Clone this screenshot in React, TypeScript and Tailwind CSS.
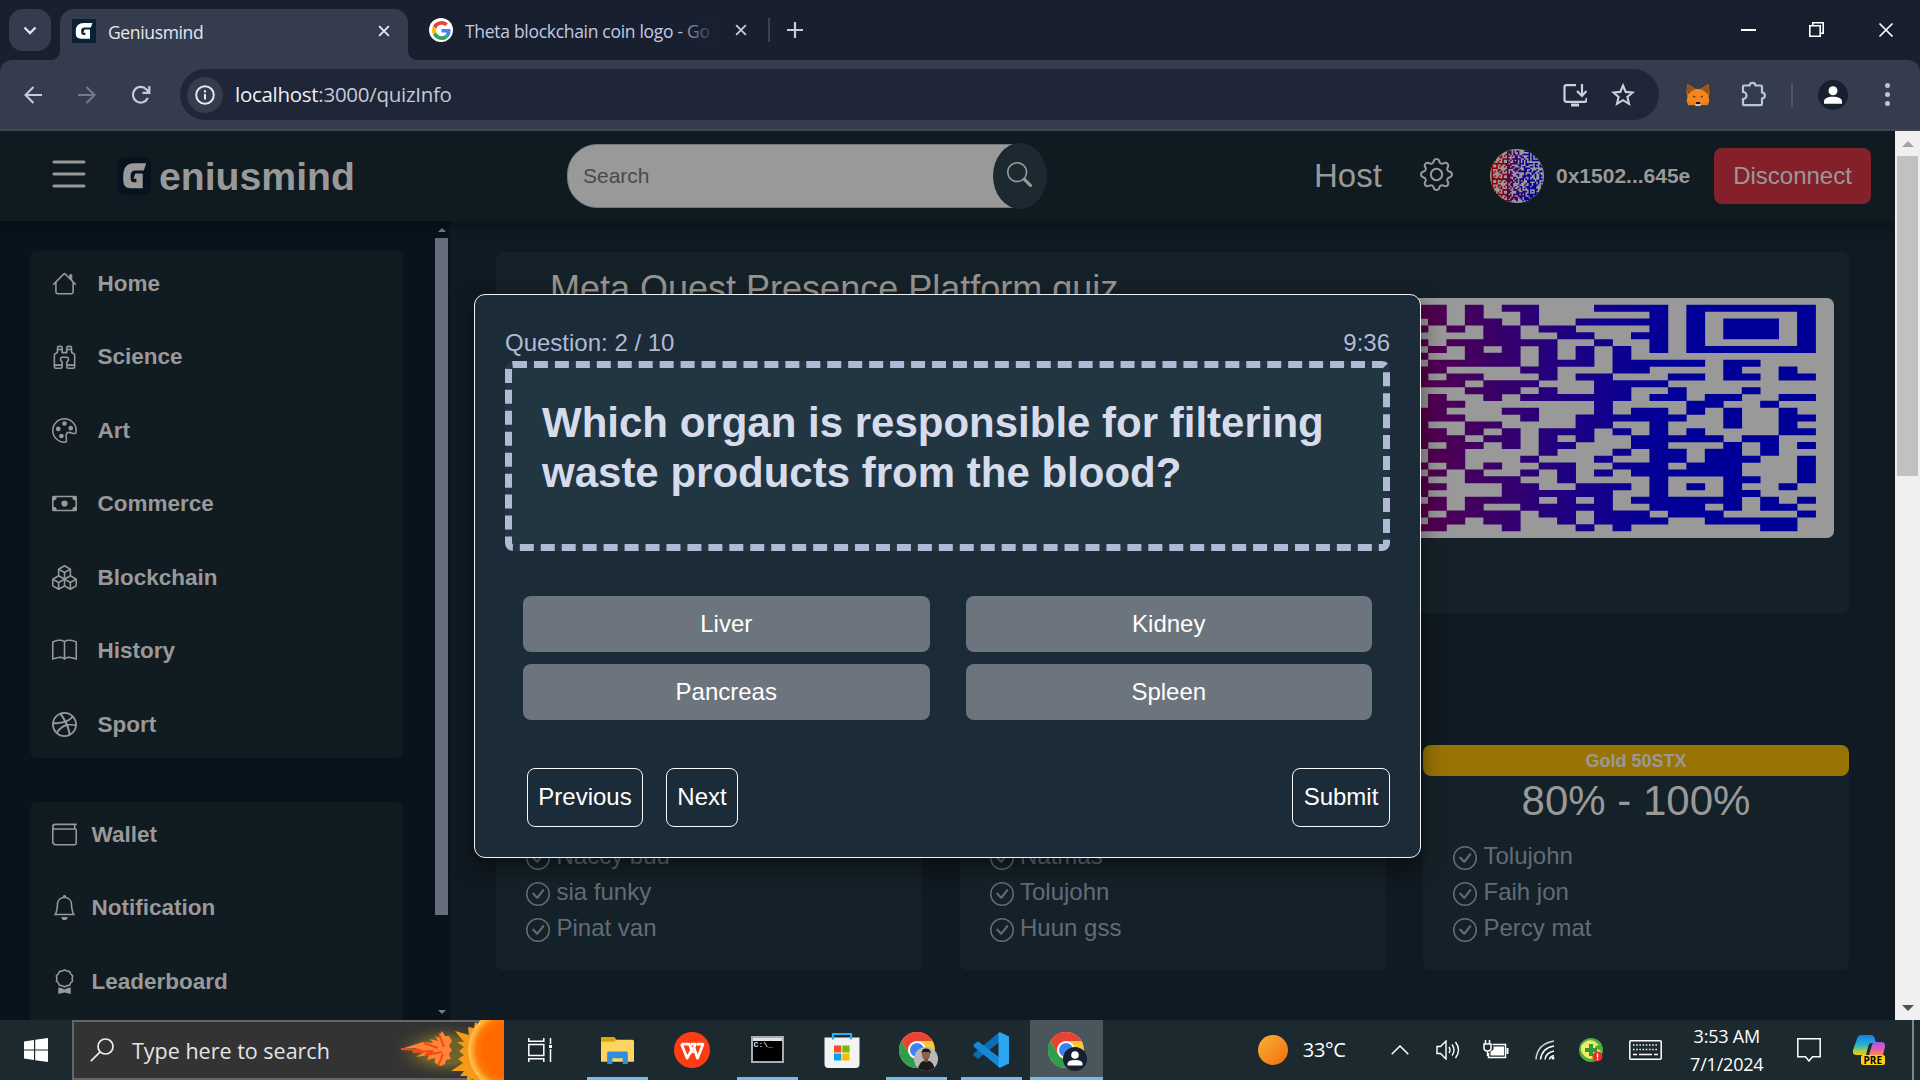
import React from "react";
import {
  BsAward,
  BsBell,
  BsBinoculars,
  BsBook,
  BsBoxes,
  BsCash,
  BsCheckCircle,
  BsDribbble,
  BsGear,
  BsHouse,
  BsList,
  BsPalette,
  BsSearch,
  BsWallet,
} from "react-icons/bs";

const QR_ROWS: number[][] = [
  [0, 1, 3, 5, 6, 10, 11, 12, 13, 15, 16, 17, 18, 19, 20, 21],
  [0, 1, 3, 6, 13, 15, 21],
  [1, 3, 4, 6, 9, 10, 11, 12, 13, 15, 17, 18, 19, 21],
  [0, 2, 4, 5, 7, 8, 13, 15, 17, 18, 19, 21],
  [4, 5, 8, 9, 12, 13, 15, 17, 18, 19, 21],
  [0, 2, 3, 4, 5, 6, 7, 10, 13, 15, 21],
  [1, 3, 5, 7, 9, 11, 13, 15, 16, 17, 18, 19, 20, 21],
  [0, 3, 4, 5, 7, 9, 11],
  [1, 2, 3, 4, 5, 7, 8, 9, 11, 12, 13, 14, 15, 17, 18],
  [0, 1, 6, 7, 11, 12, 17, 20],
  [0, 2, 3, 7, 9, 10, 14, 15, 17, 18, 20, 21],
  [0, 1, 2, 4, 5, 6, 10, 11, 12, 13],
  [3, 4, 5, 7, 10, 11, 14, 18],
  [1, 4, 6, 7, 8, 9, 10, 11, 13, 14, 16, 17, 20, 21],
  [1, 2, 10, 15, 16, 19],
  [0, 1, 5, 6, 10, 12, 13, 15, 17, 20],
  [0, 1, 2, 6, 9, 10, 11, 12, 13, 14, 17, 20, 21],
  [0, 3, 4, 9, 10, 13, 17, 20],
  [0, 1, 3, 5, 7, 8, 9, 11, 13, 15, 20, 21],
  [0, 1, 2, 4, 5, 7, 9, 12, 13, 14, 15, 16, 18, 19],
  [0, 2, 3, 5, 7, 8, 12, 13, 17, 19, 21],
  [1, 2, 7, 11, 13, 14, 16, 17, 19],
  [1, 2, 6, 10, 13, 14, 16, 17, 18, 21],
  [0, 2, 4, 7, 8, 11, 12, 13, 15, 16, 17, 21],
  [1, 3, 6, 8, 10, 12, 13, 14, 15, 16, 17, 21],
  [0, 3, 4, 5, 8, 13, 17, 18, 21],
  [0, 1, 5, 6, 9, 10, 11, 13, 15, 17, 20],
  [0, 5, 6, 7, 8, 9, 10, 13, 17, 18],
  [1, 3, 4, 5, 6, 8, 10, 12, 13, 14, 15, 16, 17, 19, 21],
  [0, 1, 3, 6, 7, 8, 9, 10, 13, 14, 15, 17, 19, 20],
  [0, 2, 3, 4, 5, 7, 8, 10, 11, 12, 14, 15, 16, 21],
  [1, 2, 4, 5, 8, 10, 11, 12, 13, 16, 17, 18, 19, 20],
  [0, 1, 5, 9, 11, 19, 20],
];

const QR_PATH = QR_ROWS.map((cols, r) => {
  const right = cols.map((c) => `M${12 + c} ${r + 1}h1.02v1.02h-1.02z`);
  const left = Array.from({ length: 11 }, (_, c) => c)
    .filter((c) => (c * 7 + r * 5 + c * r * 3 + ((c * r) >> 1)) % 5 < 2)
    .map((c) => `M${c + 1} ${r + 1}h1.02v1.02h-1.02z`);
  return right.join("") + left.join("");
}).join("");

function QrImage({ id, className }: { id: string; className: string }) {
  return (
    <svg viewBox="0 0 35 35" preserveAspectRatio="none" className={className}>
      <defs>
        <linearGradient id={id} gradientUnits="userSpaceOnUse" x1="1" y1="0" x2="34" y2="0">
          <stop offset="0" stopColor="#990000" />
          <stop offset="0.2" stopColor="#900009" />
          <stop offset="0.37" stopColor="#520050" />
          <stop offset="0.55" stopColor="#28007a" />
          <stop offset="0.7" stopColor="#080094" />
          <stop offset="0.8" stopColor="#000099" />
        </linearGradient>
      </defs>
      <rect width="35" height="35" fill="#999999" />
      <path d={QR_PATH} fill={`url(#${id})`} />
    </svg>
  );
}

function GLogo({ className, bg, fg }: { className: string; bg: string; fg: string }) {
  return (
    <svg viewBox="0 0 24 24" preserveAspectRatio="none" className={className}>
      <rect width="24" height="24" fill={bg} />
      <path
        fill={fg}
        d="M20.5 4 L18.8 8.600 H12.8 Q9.2 8.600 9.2 11.8 V13.6 Q9.2 16 11.5 16 H13.4 V13.800 H11.2 L12.6 10.400 H18 V19.8 H9 Q3.8 19.8 3.8 14.6 V12 Q3.8 4 11.8 4 Z"
      />
    </svg>
  );
}

const X = ({ className, w = 2.2 }: { className: string; w?: number }) => (
  <svg viewBox="0 0 16 16" className={className} stroke="currentColor" strokeWidth={w} fill="none">
    <path d="M1.5 1.5l13 13M14.5 1.5l-13 13" />
  </svg>
);

function GoogleG() {
  return (
    <div className="flex h-6 w-6 items-center justify-center rounded-full bg-white">
      <svg viewBox="0 0 48 48" className="h-[19px] w-[19px]">
        <path fill="#EA4335" d="M24 9.5c3.54 0 6.71 1.22 9.21 3.6l6.85-6.85C35.9 2.38 30.47 0 24 0 14.62 0 6.51 5.38 2.56 13.22l7.98 6.19C12.43 13.72 17.74 9.5 24 9.5z" />
        <path fill="#4285F4" d="M46.98 24.55c0-1.57-.15-3.09-.38-4.55H24v9.02h12.94c-.58 2.96-2.26 5.48-4.78 7.18l7.73 6c4.51-4.18 7.09-10.36 7.09-17.65z" />
        <path fill="#FBBC05" d="M10.53 28.59c-.48-1.45-.76-2.99-.76-4.59s.27-3.14.76-4.59l-7.98-6.19C.92 16.46 0 20.12 0 24c0 3.88.92 7.54 2.56 10.78l7.97-6.19z" />
        <path fill="#34A853" d="M24 48c6.48 0 11.93-2.13 15.89-5.81l-7.73-6c-2.15 1.45-4.92 2.3-8.16 2.3-6.26 0-11.57-4.22-13.47-9.91l-7.98 6.19C6.51 42.62 14.62 48 24 48z" />
      </svg>
    </div>
  );
}

function TabStrip() {
  return (
    <div className="flex h-[60px] w-full bg-[#182030] font-['Open_Sans','Noto_Sans',sans-serif]">
      <div className="ml-[9px] mt-[9px] flex h-[42px] w-[42px] items-center justify-center rounded-[14px] bg-[#343c4d]">
        <svg viewBox="0 0 14 9" className="h-[9px] w-[14px]" fill="none" stroke="#e3e5ea" strokeWidth="2.3">
          <path d="M1.5 1.5L7 7l5.500-5.500" />
        </svg>
      </div>
      <div className="flex h-[60px] w-[366px] items-end">
        <div className="h-3 w-[9px] overflow-hidden bg-[#343c4d]">
          <div className="h-3 w-[9px] rounded-br-[9px] bg-[#182030]" />
        </div>
        <div className="flex h-[51px] w-[348px] items-center rounded-t-[14px] bg-[#343c4d] pb-2 pl-3">
          <GLogo className="h-6 w-6" bg="#0a2035" fg="#ffffff" />
          <span className="ml-3 w-[260px] whitespace-nowrap pt-[3px] text-[17.500px] tracking-[-0.35px] text-[#e6e8ee]">
            Geniusmind
          </span>
          <X className="ml-[10px] h-3 w-3 text-[#e6e8ee]" w={2.4} />
        </div>
        <div className="h-3 w-[9px] overflow-hidden bg-[#343c4d]">
          <div className="h-3 w-[9px] rounded-bl-[9px] bg-[#182030]" />
        </div>
      </div>
      <div className="ml-3 flex h-[60px] items-center text-[#c3cbe0]">
        <GoogleG />
        <div className="relative ml-3 w-[251px] whitespace-nowrap pt-[3px] text-[17.500px] tracking-[-0.3px]">
          Theta blockchain coin logo - Go
          <div className="absolute right-0 top-0 h-full w-10 bg-gradient-to-r from-transparent to-[#182030]" />
        </div>
        <X className="ml-[19px] h-3 w-3 text-[#c3cbe0]" w={2.4} />
        <div className="ml-[21px] h-6 w-[2px] bg-[#3a4255]" />
        <svg viewBox="0 0 16 16" className="ml-[17px] h-4 w-4" stroke="#c3cbe0" strokeWidth="2.200">
          <path d="M8 0v16M0 8h16" />
        </svg>
      </div>
      <div className="ml-auto mr-[26px] flex h-[60px] items-center pb-[1px] text-white">
        <div className="h-[2px] w-[15px] bg-white" />
        <svg viewBox="0 0 15 15" className="ml-[53px] h-[15px] w-[15px]" fill="none" stroke="#fff" strokeWidth="1.6">
          <path d="M.8 3.800h10.400v10.400H.8zM3.800 3.500V.8h10.400v10.400h-2.800" />
        </svg>
        <X className="ml-[54px] h-4 w-4" w={1.7} />
      </div>
    </div>
  );
}

function Fox() {
  return (
    <svg viewBox="0 0 24 24" className="h-6 w-6">
      <path d="M1.500 1L9.500 6h5L22.500 1l1 8-1 4 .8 5.500-2 3.800-5-.5L14 23h-4l-2.300-1.200-5 .5-2-3.800.8-5.500-1-4z" fill="#f6851b" />
      <path d="M1.500 1l8 5.500-3 1L2 11.500.900 9zM22.500 1l-8 5.500 3 1 4.500 4 1.100-2.500z" fill="#9a5218" />
      <path d="M1 18.500l7 .5 1.500 3-2 0-5 .3zM23 18.500l-7 .5-1.500 3 2 0 5 .3z" fill="#e8821e" />
      <path d="M7 12.500l3 1.300-2.500.7zM17 12.500l-3 1.300 2.500.7z" fill="#3b2b25" />
      <path d="M9 19.500h6l-.5 3.500h-5z" fill="#d5bfb2" />
      <path d="M10 19h4l.5 2h-5z" fill="#161616" />
    </svg>
  );
}

function Toolbar() {
  return (
    <div className="bg-[#182030]">
      <div className="flex h-[69px] items-center rounded-t-[12px] bg-[#343c4d] text-[#c3cbe0]">
        <svg viewBox="0 0 18 18" className="ml-6 h-[18px] w-[18px]" fill="none" stroke="currentColor" strokeWidth="2.100">
          <path d="M18 9H2M9.500 1L1.500 9l8 8" />
        </svg>
        <svg viewBox="0 0 18 18" className="ml-9 h-[18px] w-[18px]" fill="none" stroke="#737a8a" strokeWidth="2.100">
          <path d="M0 9h16M8.500 1l8 8-8 8" />
        </svg>
        <svg viewBox="0 0 20 20" className="ml-[35px] h-5 w-5" fill="none" stroke="currentColor" strokeWidth="2.200">
          <path d="M16.800 13A7.800 7.800 0 1 1 15.500 4.500L18 7M18.300 1v6.800h-6.800" />
        </svg>
        <div className="ml-[29px] flex h-[51px] w-[1479px] items-center rounded-full bg-[#1e2637] pl-[7px]">
          <div className="flex h-9 w-9 items-center justify-center rounded-full bg-[#343c4d]">
            <svg viewBox="0 0 20 20" className="h-5 w-5" fill="none" stroke="#e6e8ee" strokeWidth="2">
              <circle cx="10" cy="10" r="8.800" />
              <path d="M10 9v5.500M10 5.300v2.200" />
            </svg>
          </div>
          <span className="ml-3 whitespace-nowrap font-['Open_Sans','Noto_Sans',sans-serif] text-[20.500px] tracking-[-0.28px] text-[#c5cad6]">
            <span className="text-[#eef0f4]">localhost</span>:3000/quizInfo
          </span>
          <div className="ml-auto mr-6 flex items-center gap-6">
            <svg viewBox="0 0 24 24" className="h-6 w-6" fill="none" stroke="#ccd0de" strokeWidth="2.200">
              <path d="M13 2.200H3.500Q1.500 2.200 1.500 4.200v12.600q0 2 2 2h18q2 0 2-2V15M19 1v11M14 8l5 5 4.500-5" />
              <path d="M8 22h8" strokeWidth="3" />
            </svg>
            <svg viewBox="0 0 24 24" className="h-6 w-6" fill="none" stroke="#ccd0de" strokeWidth="2.100">
              <path d="M12 2.500l2.700 6.400 6.900.6-5.200 4.500 1.600 6.800-6-3.600-6 3.600 1.600-6.800-5.200-4.500 6.900-.6z" />
            </svg>
          </div>
        </div>
        <div className="ml-[27px] flex items-center">
          <Fox />
          <svg viewBox="0 0 26 26" className="mb-[2px] ml-[31px] h-[26px] w-[26px]" fill="none" stroke="#b9c6e2" strokeWidth="2.200">
            <path d="M2 5.500Q2 4.500 3 4.500h5.500a3 2.700 0 0 1 6 0H19.500q1.500 0 1.500 1.500v5.500a2.800 3 0 0 1 0 6V23q0 1.200-1.500 1.200H3Q2 24.200 2 23.200V18a3.500 3.500 0 0 0 0-7z" />
          </svg>
          <div className="ml-[24px] h-6 w-[2px] bg-[#4c566c]" />
          <div className="ml-[25px] flex h-[30px] w-[30px] items-center justify-center rounded-full bg-[#182030]">
            <svg viewBox="0 0 18 18" className="h-[18px] w-[18px]" fill="#fff">
              <circle cx="9" cy="4.800" r="4.500" />
              <path d="M0 17.800v-2.300C0 12.500 3.500 10.800 9 10.800s9 1.700 9 4.700v2.300z" />
            </svg>
          </div>
          <div className="ml-[37px] flex flex-col gap-[4px]">
            <div className="h-[5px] w-[5px] rounded-full bg-[#b9c6e2]" />
            <div className="h-[5px] w-[5px] rounded-full bg-[#b9c6e2]" />
            <div className="h-[5px] w-[5px] rounded-full bg-[#b9c6e2]" />
          </div>
        </div>
      </div>
      <div className="h-[2px] bg-[#42454e]" />
    </div>
  );
}

function Header() {
  return (
    <header className="relative z-10 flex h-[90px] shrink-0 items-center bg-[#101a21] text-[#999] shadow-[0_6px_12px_rgba(0,0,0,0.25)]">
      <BsList className="mb-[5px] ml-[45px] h-12 w-12" />
      <GLogo className="ml-[25px] h-[38px] w-[33px] rounded-[6px]" bg="#06131f" fg="#999999" />
      <span className="ml-[8px] mt-[2px] w-[200px] text-[39.200px] font-bold">eniusmind</span>
      <div className="relative ml-[208px] flex h-[66px] w-[480px] items-center">
        <div className="flex h-[64px] w-[453px] items-center rounded-l-[30px] border border-[#737883] bg-[#999] pl-[15px] text-[21px] text-[#484a4c]">
          Search
        </div>
        <div className="absolute right-0 top-0 flex h-[66px] w-[54px] items-center justify-center rounded-[50%] bg-[#1d2931]">
          <BsSearch className="mb-[4px] mr-[1px] h-[25px] w-[25px]" />
        </div>
      </div>
      <span className="ml-[267px] w-[70px] text-[33px]">Host</span>
      <BsGear className="ml-[36px] mb-[4px] h-[33px] w-[33px]" />
      <QrImage id="avatar-fill" className="ml-[37px] h-[54px] w-[54px] rounded-full" />
      <span className="ml-[12px] w-[136px] text-[21px] font-bold">0x1502...645e</span>
      <div className="ml-[22px] flex h-[56px] w-[157px] items-center justify-center rounded-[8px] bg-[#84202a] text-[24px]">
        Disconnect
      </div>
    </header>
  );
}

const TOPICS = [
  { label: "Home", Icon: BsHouse },
  { label: "Science", Icon: BsBinoculars },
  { label: "Art", Icon: BsPalette },
  { label: "Commerce", Icon: BsCash },
  { label: "Blockchain", Icon: BsBoxes },
  { label: "History", Icon: BsBook },
  { label: "Sport", Icon: BsDribbble },
];

const ACCOUNT = [
  { label: "Wallet", Icon: BsWallet },
  { label: "Notification", Icon: BsBell },
  { label: "Leaderboard", Icon: BsAward },
];

function Sidebar() {
  return (
    <aside className="flex w-[450px] shrink-0 bg-[#08131b] text-[22.500px] font-bold text-[#999]">
      <div className="ml-[30px] w-[373px] overflow-hidden pt-[30px]">
        <div className="flex h-[507px] flex-col gap-[8.500px] rounded-[7px] bg-[#101b22] pl-[22px]">
          {TOPICS.map(({ label, Icon }) => (
            <div key={label} className="flex h-[65px] shrink-0 items-center">
              <Icon className="mb-[1px] h-[25px] w-[25px]" />
              <span className="ml-[20.500px]">{label}</span>
            </div>
          ))}
        </div>
        <div className="mt-[44px] flex h-[300px] flex-col gap-[8.500px] rounded-[7px] bg-[#101b22] pl-[22px]">
          {ACCOUNT.map(({ label, Icon }) => (
            <div key={label} className="flex h-[65px] shrink-0 items-center">
              <Icon className="mb-[1px] h-[25px] w-[25px]" />
              <span className="ml-[14.500px]">{label}</span>
            </div>
          ))}
        </div>
      </div>
      <div className="ml-8 flex w-[13px] flex-col items-center">
        <div className="mt-[7px] border-x-[4px] border-b-[4px] border-x-transparent border-b-[#767c88]" />
        <div className="mt-[6px] h-[677px] w-[13px] bg-[#676d7b]" />
        <div className="mt-[95px] border-x-[4px] border-t-[4px] border-x-transparent border-t-[#767c88]" />
      </div>
    </aside>
  );
}

const TIERS = [
  { id: "bronze", title: "", range: "", bar: "bg-[#6b3d1c]", names: ["Naccy buu", "sia funky", "Pinat van"] },
  { id: "silver", title: "", range: "", bar: "bg-[#6c757d]", names: ["Natmas", "Tolujohn", "Huun gss"] },
  { id: "gold", title: "Gold 50STX", range: "80% - 100%", bar: "bg-[#997404]", names: ["Tolujohn", "Faih jon", "Percy mat"] },
];

function Content() {
  return (
    <main className="flex-1 bg-[#101a22] pl-[46px] pt-[31px]">
      <section className="flex h-[361px] w-[1353px] justify-between rounded-[7px] bg-[#152128] pr-[15px]">
        <h1 className="ml-[54px] mt-[15px] whitespace-nowrap text-[36px] leading-[1.2] text-[#999590]">
          Meta Quest Presence Platform quiz
        </h1>
        <QrImage id="cover-fill" className="mt-[46px] h-[240px] w-[646px] shrink-0 rounded-[7px]" />
      </section>
      <section className="mt-[132px] grid w-[1353px] grid-cols-3 gap-[37.500px]">
        {TIERS.map((t) => (
          <div key={t.id} className="h-[225px] rounded-[7px] bg-[#152128]">
            <div className={`flex h-[31px] items-center justify-center rounded-[8px] pt-[1px] text-[18px] font-bold text-[#999] ${t.bar}`}>
              {t.title}
            </div>
            <div className="h-[50px] text-center text-[42px] leading-[50px] text-[#999]">{t.range}</div>
            <ul className="mt-[12px] pl-[30px] text-[24px] leading-[36px] text-[#636b79]">
              {t.names.map((n) => (
                <li key={n} className="flex h-9 items-center">
                  <BsCheckCircle className="mt-[4px] h-6 w-6" />
                  <span className="ml-[6.500px]">{n}</span>
                </li>
              ))}
            </ul>
          </div>
        ))}
      </section>
    </main>
  );
}

function QuizModal() {
  const outline = "flex h-[59px] items-center justify-center rounded-[8px] border border-[#f8f9fa] pb-[2px] text-[24px] text-white";
  return (
    <div className="absolute left-[474px] top-[163px] z-20 h-[564px] w-[947px] rounded-[11px] border border-[#f0f2f4] bg-[#1b2b37] pl-[30px] pr-[30px] pt-[30px] shadow-[0_8px_24px_rgba(0,0,0,0.5)]">
      <div className="flex h-[36px] items-center justify-between text-[24px] text-[#b0b9d6]">
        <span>Question: 2 / 10</span>
        <span>9:36</span>
      </div>
      <div className="h-[190px] w-[885px] rounded-[8px] border-[7px] border-dashed border-[#b0b9d6] bg-[#223642] pl-[30px] pt-[30px]">
        <h2 className="w-[800px] text-[42px] font-bold leading-[50px] text-[#d6dcec]">
          Which organ is responsible for filtering
          <br />
          waste products from the blood?
        </h2>
      </div>
      <div className="mt-[45px] grid grid-cols-2 gap-x-[36px] gap-y-[12px] px-[18px]">
        {["Liver", "Kidney", "Pancreas", "Spleen"].map((a) => (
          <div key={a} className="flex h-[56px] items-center justify-center rounded-[8px] bg-[#6c757d] text-[24px] text-white">
            {a}
          </div>
        ))}
      </div>
      <div className="mt-[48px] flex pl-[22px]">
        <div className={`${outline} w-[116px]`}>Previous</div>
        <div className={`${outline} ml-[23px] w-[72px]`}>Next</div>
        <div className={`${outline} ml-auto w-[98px]`}>Submit</div>
      </div>
    </div>
  );
}

function PageScrollbar() {
  return (
    <div className="flex w-[25px] shrink-0 flex-col items-center bg-[#f0f0f0]">
      <div className="mt-[10px] border-x-[6px] border-b-[6px] border-x-transparent border-b-[#a3a3a3]" />
      <div className="mt-[9px] h-[320px] w-[21px] bg-[#c1c1c1]" />
      <div className="mt-auto mb-[9px] border-x-[6px] border-t-[6px] border-x-transparent border-t-[#505050]" />
    </div>
  );
}

function ChromeIcon({ children, bg }: { children: React.ReactNode; bg: string }) {
  return (
    <div className="relative h-[36px] w-[36px]">
      <svg viewBox="0 0 36 36" className="h-[36px] w-[36px]">
        <circle cx="18" cy="18" r="18" fill="#fcc934" />
        <path d="M2.400 9A18 18 0 0 1 33.600 9H18a9 9 0 0 0-7.800 13.500z" fill="#ea4335" />
        <path d="M2.400 9A18 18 0 0 0 18 36l7.800-13.500a9 9 0 0 1-15.600 0z" fill="#2f9e4f" />
        <circle cx="18" cy="18" r="8.800" fill="#fff" />
        <circle cx="18" cy="18" r="7" fill="#3b82f6" />
      </svg>
      <svg viewBox="0 0 24 24" className={`absolute left-[15px] top-[15px] h-6 w-6 rounded-full ${bg}`}>
        {children}
      </svg>
    </div>
  );
}

function TaskButton({ children, state }: { children: React.ReactNode; state?: "open" | "active" }) {
  return (
    <div className={`relative flex h-[60px] w-[73px] items-center justify-center ${state === "active" ? "bg-[#4a565b]" : ""}`}>
      {children}
      {state === "open" && <div className="absolute bottom-0 left-[6px] h-[3px] w-[61px] bg-[#76b9ed]" />}
      {state === "active" && <div className="absolute bottom-0 left-0 h-[3px] w-[73px] bg-[#76b9ed]" />}
    </div>
  );
}

function TaskSearch() {
  return (
    <div className="flex h-[60px] w-[432px] border-2 border-r-0 border-[#666] bg-[#333] pl-4">
      <svg viewBox="0 0 24 24" className="mt-4 h-6 w-6" fill="none" stroke="#eee" strokeWidth="1.700">
        <circle cx="15.500" cy="8.500" r="7.500" />
        <path d="M10.200 13.800L.8 23.200" />
      </svg>
      <span className="ml-[18px] mt-[13px] w-[210px] whitespace-nowrap text-[21.500px] text-[#e4e4e4]">Type here to search</span>
      <svg viewBox="0 0 116 60" className="-mt-[2px] ml-auto h-[60px] w-[116px]">
        <defs>
          <radialGradient id="glow">
            <stop offset="0.45" stopColor="#6d622a" />
            <stop offset="1" stopColor="#333333" stopOpacity="0" />
          </radialGradient>
          <radialGradient id="sun" gradientUnits="userSpaceOnUse" cx="122" cy="30" r="45">
            <stop offset="0.6" stopColor="#ff6a00" />
            <stop offset="0.75" stopColor="#ff7a08" />
            <stop offset="0.9" stopColor="#ffc04a" />
            <stop offset="1" stopColor="#ffa01e" />
          </radialGradient>
        </defs>
        <ellipse cx="58" cy="31" rx="56" ry="29" fill="url(#glow)" />
        <path d="M116 0H96l-6 4-3-2-1 6-6-1 1 8-14-4 9 11-7 0 7 5-5 4 5 4-6 4 5 4-12 8 13 0-4 5 7 0 0 5 6-2 2 3 3-1 2 1h22z" fill="#f59a18" />
        <circle cx="122" cy="30" r="42" fill="url(#sun)" />
        <path d="M13 29l16-1-5 4 12 0-8 5 13-2-2 5 8-2 0 5 6 3 4-2 1-4 5-1-2-5 3-4-3-4 3-5-3-5-4 0-3-5-2 3-1-2 1 6-5-2 3 5-8-2 3 4-10-1z" fill="#ff8436" />
        <path d="M13 29l20 1-8 2 20-1-8 4 17-3M51 14l5 13M50 46l5-12M36 23l14 5" stroke="#f24a14" strokeWidth="2" fill="none" />
      </svg>
    </div>
  );
}

function Taskbar() {
  return (
    <div className="flex h-[60px] w-full items-center bg-[#1c2a30] font-['Open_Sans','Noto_Sans',sans-serif] text-white">
      <div className="flex h-[60px] w-[72px] items-center justify-center">
        <svg viewBox="0 0 24 24" className="h-6 w-6" fill="#fff">
          <path d="M0 3.400L10 2v9.500H0zM11.200 1.800L24 0v11.500H11.200zM0 12.600h10V22L0 20.600zM11.200 12.600H24V24l-12.800-1.800z" />
        </svg>
      </div>
      <TaskSearch />
      <svg viewBox="0 0 24 24" className="ml-6 h-6 w-6" fill="none" stroke="#fff" strokeWidth="1.500">
        <path d="M.8 0v3.200h15V0M.8 24v-3.200h15V24M.8 6.500h15v11H.8zM22.500 0v6M22.500 11v13" />
        <path d="M21 8.500h3" strokeWidth="3" />
      </svg>
      <div className="ml-[29px] flex gap-[1.800px]">
        <TaskButton state="open">
          <svg viewBox="0 0 32 26" className="h-[27px] w-[33px]">
            <path d="M0 1.500Q0 0 1.500 0h11l2.500 2.500h15.500Q32 2.500 32 4v20H0z" fill="#ffd45e" />
            <path d="M0 1.500Q0 0 1.500 0h11l2.500 2.500-2.500 2H0z" fill="#e2a30c" />
            <path d="M6 26V15.500Q6 14 7.500 14h17Q26 14 26 15.500V26h-5v-5.500H11V26z" fill="#2f8ddb" />
          </svg>
        </TaskButton>
        <TaskButton>
          <svg viewBox="0 0 36 36" className="h-[36px] w-[36px]">
            <circle cx="18" cy="18" r="18" fill="#ff3c12" />
            <path
              d="M7.500 12.200h7.800L19 21M7.500 12.200l5.700 14L19 15.500M17 12.200h4.500l-1.500 3.500 3.500 10.500 5.500-14h-6"
              fill="none"
              stroke="#fff"
              strokeWidth="2.700"
              strokeLinejoin="round"
            />
          </svg>
        </TaskButton>
        <TaskButton state="open">
          <div className="mb-[2px] flex h-[27px] w-[33px] flex-col border-2 border-[#a6adb3] bg-black">
            <div className="h-[3px] bg-[#dfe3e6]" />
            <span className="pl-[1px] font-['Liberation_Mono',monospace] text-[8px] font-bold leading-[8px] text-[#ddd]">C:\_</span>
          </div>
        </TaskButton>
        <TaskButton>
          <svg viewBox="0 0 36 36" className="h-[36px] w-[36px]">
            <path d="M.5 5.500h35V32q0 4-4 4h-27q-4 0-4-4z" fill="#f3f3f3" />
            <path d="M9 7.500V2h18v5.500" stroke="#22b4ee" strokeWidth="2.200" fill="none" />
            <path d="M10 13.500h7.300v7H10z" fill="#f25022" />
            <path d="M18.300 13.500h7.300v7h-7.300z" fill="#7fba00" />
            <path d="M10 21.500h7.300v7H10z" fill="#00a4ef" />
            <path d="M18.300 21.500h7.300v7h-7.300z" fill="#ffb900" />
          </svg>
        </TaskButton>
        <TaskButton state="open">
          <ChromeIcon bg="bg-[#b9b9bb]">
            <ellipse cx="12" cy="8" rx="4" ry="5" fill="#8d6048" />
            <path d="M7.500 7q0-6 5-5.500t4 5.500l-1.500-2h-6z" fill="#1c1614" />
            <path d="M4 24q0-10 8-10.500T21 24z" fill="#1d1a1c" />
            <path d="M10 12h4l-.5 3h-3z" fill="#7a4c35" />
          </ChromeIcon>
        </TaskButton>
        <TaskButton state="open">
          <svg viewBox="0 0 36 36" className="h-[36px] w-[36px]">
            <path d="M26.500 0v10L5 27 .8 23.500q-1.300-1 0-2.200z" fill="#0b6cb5" />
            <path d="M.8 12.500L5 9.200 27 26v10L.8 14.700q-1-1.100 0-2.200z" fill="#1389d4" />
            <path d="M26.500 0L36 4.500v27L26.500 36l-1-2V2z" fill="#2aa6f2" />
          </svg>
        </TaskButton>
        <TaskButton state="active">
          <ChromeIcon bg="bg-[#182030]">
            <circle cx="12" cy="8" r="3.800" fill="#fff" />
            <path d="M4.500 18.500v-2q0-3.500 7.500-3.500t7.500 3.500v2z" fill="#fff" />
          </ChromeIcon>
        </TaskButton>
      </div>
      <div className="ml-[155px] h-[30px] w-[30px] rounded-full bg-gradient-to-br from-[#fbb034] to-[#ee6c0e]" />
      <span className="ml-[15px] w-[50px] whitespace-nowrap text-[20px] tracking-[-0.300px]">33°C</span>
      <svg viewBox="0 0 18 10" className="ml-[38px] h-[10px] w-[18px]" fill="none" stroke="#fff" strokeWidth="1.500">
        <path d="M.7 9.300L9 1l8.300 8.300" />
      </svg>
      <svg viewBox="0 0 24 20" className="ml-[27px] h-[20px] w-6" fill="none" stroke="#fff" strokeWidth="1.400">
        <path d="M1 6.500h3.500L10 1v18l-5.500-5.500H1zM13 7q2 3 0 6M16 4.500q4 5.500 0 11M19.500 2q6 8 0 16" />
      </svg>
      <svg viewBox="0 0 26 20" className="ml-[23px] h-5 w-[26px]" fill="none" stroke="#fff" strokeWidth="1.500">
        <path d="M9.500 4.500h13v13h-17V13M2.500 0v4M6.500 0v4M1 4h7v4q0 3-3.500 3T1 8zM4.500 11v5" />
        <path d="M10.500 6.500H21v9H7.500v-4l3-2z" fill="#fff" stroke="none" />
        <path d="M24.500 8v6" strokeWidth="2" />
      </svg>
      <svg viewBox="0 0 20 20" className="ml-[26px] h-5 w-5" fill="none" stroke="#fff" strokeWidth="1.500">
        <path d="M1 19.500Q2 4 19 1" opacity="0.800" />
        <path d="M5.500 19.500Q7 8 19 6M10 19.500q1-7 9-8.500M14.500 19.500q.5-3 4.500-4" />
        <circle cx="18" cy="18" r="1.500" fill="#fff" stroke="none" />
      </svg>
      <svg viewBox="0 0 24 24" className="ml-6 h-6 w-6">
        <circle cx="12" cy="12" r="12" fill="#4fae42" />
        <path d="M2 8Q8 0 15 3L20 7q-4 0-4 3l6 3-3 6-8 2Q1 18 2 8z" fill="#f4ea63" />
        <path d="M12 6v12M6 12h12" stroke="#2e9a37" strokeWidth="4" />
        <circle cx="18.500" cy="18.500" r="5" fill="#ee2b2b" />
        <path d="M18.500 15.500v4M18.500 20.500v1.500" stroke="#fff" strokeWidth="1.400" />
      </svg>
      <svg viewBox="0 0 33 20" className="ml-[26px] h-5 w-[33px]" fill="none" stroke="#fff" strokeWidth="1.500">
        <rect x=".8" y=".8" width="31.400" height="18.400" rx="1" />
        <path d="M4 5h25M4 9.500h25" strokeDasharray="1.500 1.700" />
        <path d="M4 14.500h4M10 14.500h13M25 14.500h4" />
      </svg>
      <div className="ml-[24px] flex w-[82px] flex-col items-center text-[18px] leading-[28px] tracking-[-0.200px]">
        <span className="whitespace-nowrap">3:53 AM</span>
        <span className="whitespace-nowrap">7/1/2024</span>
      </div>
      <svg viewBox="0 0 24 24" className="ml-[29px] h-6 w-6" fill="none" stroke="#fff" strokeWidth="1.500">
        <path d="M.8.8h22.400v18H15.500L12 23l-3.500-4.200H.8z" />
      </svg>
      <div className="relative ml-[32px] h-[30px] w-[32px]">
        <svg viewBox="0 0 32 30" className="h-[30px] w-[32px]">
          <defs>
            <linearGradient id="cpA" x1="0" y1="0" x2="0" y2="1">
              <stop offset="0" stopColor="#1a7ae8" />
              <stop offset="0.5" stopColor="#25b6d2" />
              <stop offset="0.8" stopColor="#a4cf3f" />
              <stop offset="1" stopColor="#f6c615" />
            </linearGradient>
            <linearGradient id="cpB" x1="0" y1="0" x2="0" y2="1">
              <stop offset="0" stopColor="#9a5cf0" />
              <stop offset="0.6" stopColor="#ec5fa0" />
              <stop offset="1" stopColor="#ff8c4a" />
            </linearGradient>
          </defs>
          <path d="M8 0h10q3 0 4 4l1 4h-5q-2 0-2.700 3L13 20H3q-4 0-3-5L4 4Q5 0 8 0z" fill="url(#cpA)" />
          <path d="M22 7h6q5 0 4 5l-2 8H16l3-10q1-3 3-3z" fill="url(#cpB)" />
        </svg>
        <div className="absolute bottom-0 left-[8px] flex h-[10px] w-6 items-center justify-center rounded-[2px] bg-[#ffd21a] text-[10px] font-bold leading-none text-black">
          PRE
        </div>
      </div>
      <div className="ml-auto mr-[6px] h-[60px] w-[2px] bg-[#7c878b]" />
    </div>
  );
}

export default function App() {
  return (
    <div className="flex h-[1080px] w-[1920px] flex-col overflow-hidden bg-[#101a22] font-['Liberation_Sans',Arial,sans-serif]">
      <TabStrip />
      <Toolbar />
      <div className="relative flex h-[889px] w-full">
        <div className="flex w-[1895px] flex-col overflow-hidden">
          <Header />
          <div className="flex h-[799px]">
            <Sidebar />
            <Content />
          </div>
        </div>
        <PageScrollbar />
        <QuizModal />
      </div>
      <Taskbar />
    </div>
  );
}
